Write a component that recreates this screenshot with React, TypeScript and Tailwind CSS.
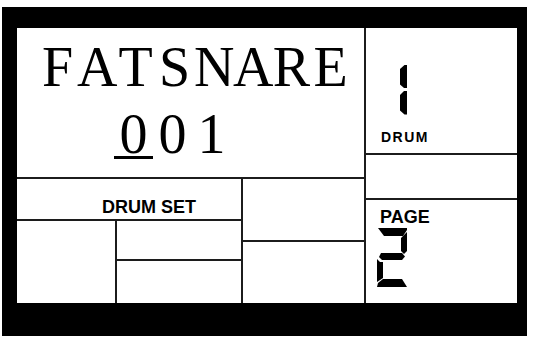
import React from 'react'

// seven-segment style digits, as on the unit's LCD
function DigitOne() {
  return (
    <svg width="7" height="50" viewBox="0 0 7 50" className="block">
      <polygon points="4.5,0 7,0 7,23 4,23 0,19.5 0,4" fill="#000" />
      <polygon points="4,26 7,26 7,49.5 4.5,49.5 0,45.5 0,30" fill="#000" />
    </svg>
  )
}

function DigitTwo() {
  return (
    <svg width="32" height="62" viewBox="0 0 32 62" className="block">
      <polygon points="2,2 31,2 31,4 27,10 8,10" fill="#000" />
      <polygon points="31,6 31,25 28,28 25,25 25,12" fill="#000" />
      <polygon points="5,27 26,27 29,30.5 26,34 6,34 3,31" fill="#000" />
      <polygon points="1,33 4,36 7,36 7,52 1,56" fill="#000" />
      <polygon points="2,57 7,53 26,53 31,61 1,61" fill="#000" />
    </svg>
  )
}

function Label({ children, className = '' }: { children: React.ReactNode; className?: string }) {
  return (
    <div className={`font-['Liberation_Sans',Arial,sans-serif] font-bold leading-none text-black ${className}`}>
      {children}
    </div>
  )
}

// the LCD font is a typewriter serif; draw it in fixed 39px cells
function MonoLine({ text, cursor = -1 }: { text: string; cursor?: number }) {
  return (
    <div className="flex">
      {text.split('').map((ch, i) => (
        <span key={i} className="relative inline-block w-[39px] text-center">
          {ch}
          {i === cursor && <span className="absolute left-0 right-0 top-[55px] h-[3px] bg-black" />}
        </span>
      ))}
    </div>
  )
}

export default function App() {
  return (
    <div className="h-[340px] w-[537px] overflow-hidden bg-white pl-[2px] pt-[7px]">
      <div className="h-[329px] w-[525px] bg-black pb-[33px] pl-[15px] pr-[10px] pt-[21px]">
        <div className="flex h-full gap-[2px] bg-[#1c1c1c]">
          {/* left side */}
          <div className="flex w-[347px] flex-col gap-[2px]">
            {/* patch name */}
            <div className="h-[149px] bg-white pt-[6px] font-['Liberation_Serif','Times_New_Roman',serif] text-[56px] leading-[67px] text-black">
              <div className="pl-[21px]">
                <MonoLine text="FATSNARE" />
              </div>
              <div className="pl-[97px]">
                <MonoLine text="001" cursor={0} />
              </div>
            </div>

            <div className="flex flex-1 gap-[2px]">
              <div className="flex w-[224px] flex-col gap-[2px]">
                <Label className="h-[40px] bg-white pl-[85px] pt-[19px] text-[18px]">DRUM SET</Label>
                <div className="flex flex-1 gap-[2px]">
                  <div className="w-[98px] bg-white" />
                  <div className="flex flex-1 flex-col gap-[2px]">
                    <div className="h-[38px] bg-white" />
                    <div className="flex-1 bg-white" />
                  </div>
                </div>
              </div>
              <div className="flex flex-1 flex-col gap-[2px]">
                <div className="h-[61px] bg-white" />
                <div className="flex-1 bg-white" />
              </div>
            </div>
          </div>

          {/* right side */}
          <div className="flex flex-1 flex-col gap-[2px]">
            <div className="h-[125px] bg-white pt-[37px]">
              <div className="pl-[34px]">
                <DigitOne />
              </div>
              <Label className="mt-[15px] pl-[15px] text-[14px] tracking-[1.5px]">DRUM</Label>
            </div>
            <div className="h-[43px] bg-white" />
            <div className="flex-1 bg-white pt-[8px]">
              <Label className="pl-[14px] text-[18px]">PAGE</Label>
              <div className="pl-[10px]">
                <DigitTwo />
              </div>
            </div>
          </div>
        </div>
      </div>
    </div>
  )
}
